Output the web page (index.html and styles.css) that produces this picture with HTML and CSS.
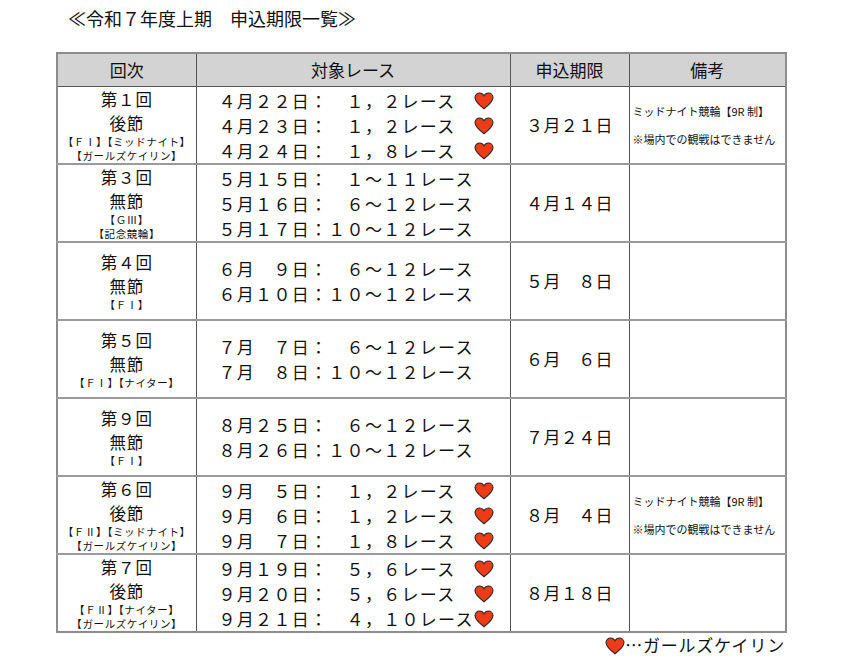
FILE: index.html
```html
<!DOCTYPE html>
<html lang="ja">
<head>
<meta charset="utf-8">
<title>申込期限一覧</title>
<link rel="stylesheet" href="styles.css">
</head>
<body>
<div class="page">
  <h1 class="title">≪令和７年度上期　申込期限一覧≫</h1>
  <table class="schedule">
    <colgroup>
      <col class="c-kai"><col class="c-race"><col class="c-date"><col class="c-note">
    </colgroup>
    <thead>
      <tr><th>回次</th><th>対象レース</th><th>申込期限</th><th>備考</th></tr>
    </thead>
    <tbody>
      <tr>
        <td class="kai"><div class="k">第１回</div><div class="s">後節</div><div class="t">【ＦⅠ】【ミッドナイト】</div><div class="t">【ガールズケイリン】</div></td>
        <td class="race">
          <div>４月２２日：　１，２レース　<svg class="heart" viewBox="0 0 20 18"><path d="M10 16.8C4.3 12.4 1 9.3 1 5.6 1 2.9 3.1 1 5.6 1c2 0 3.5 1.1 4.4 2.8C10.9 2.1 12.4 1 14.4 1 16.9 1 19 2.9 19 5.6c0 3.7-3.3 6.8-9 11.2z"/></svg></div>
          <div>４月２３日：　１，２レース　<svg class="heart" viewBox="0 0 20 18"><path d="M10 16.8C4.3 12.4 1 9.3 1 5.6 1 2.9 3.1 1 5.6 1c2 0 3.5 1.1 4.4 2.8C10.9 2.1 12.4 1 14.4 1 16.9 1 19 2.9 19 5.6c0 3.7-3.3 6.8-9 11.2z"/></svg></div>
          <div>４月２４日：　１，８レース　<svg class="heart" viewBox="0 0 20 18"><path d="M10 16.8C4.3 12.4 1 9.3 1 5.6 1 2.9 3.1 1 5.6 1c2 0 3.5 1.1 4.4 2.8C10.9 2.1 12.4 1 14.4 1 16.9 1 19 2.9 19 5.6c0 3.7-3.3 6.8-9 11.2z"/></svg></div>
        </td>
        <td class="date">３月２１日</td>
        <td class="note"><div>ミッドナイト競輪【9R 制】</div><div>※場内での観戦はできません</div></td>
      </tr>
      <tr>
        <td class="kai"><div class="k">第３回</div><div class="s">無節</div><div class="t">【ＧⅢ】</div><div class="t">【記念競輪】</div></td>
        <td class="race">
          <div>５月１５日：　１～１１レース</div>
          <div>５月１６日：　６～１２レース</div>
          <div>５月１７日：１０～１２レース</div>
        </td>
        <td class="date">４月１４日</td>
        <td class="note"></td>
      </tr>
      <tr>
        <td class="kai"><div class="k">第４回</div><div class="s">無節</div><div class="t">【ＦⅠ】</div></td>
        <td class="race">
          <div>６月　９日：　６～１２レース</div>
          <div>６月１０日：１０～１２レース</div>
        </td>
        <td class="date">５月　８日</td>
        <td class="note"></td>
      </tr>
      <tr>
        <td class="kai"><div class="k">第５回</div><div class="s">無節</div><div class="t">【ＦⅠ】【ナイター】</div></td>
        <td class="race">
          <div>７月　７日：　６～１２レース</div>
          <div>７月　８日：１０～１２レース</div>
        </td>
        <td class="date">６月　６日</td>
        <td class="note"></td>
      </tr>
      <tr>
        <td class="kai"><div class="k">第９回</div><div class="s">無節</div><div class="t">【ＦⅠ】</div></td>
        <td class="race">
          <div>８月２５日：　６～１２レース</div>
          <div>８月２６日：１０～１２レース</div>
        </td>
        <td class="date">７月２４日</td>
        <td class="note"></td>
      </tr>
      <tr>
        <td class="kai"><div class="k">第６回</div><div class="s">後節</div><div class="t">【ＦⅡ】【ミッドナイト】</div><div class="t">【ガールズケイリン】</div></td>
        <td class="race">
          <div>９月　５日：　１，２レース　<svg class="heart" viewBox="0 0 20 18"><path d="M10 16.8C4.3 12.4 1 9.3 1 5.6 1 2.9 3.1 1 5.6 1c2 0 3.5 1.1 4.4 2.8C10.9 2.1 12.4 1 14.4 1 16.9 1 19 2.9 19 5.6c0 3.7-3.3 6.8-9 11.2z"/></svg></div>
          <div>９月　６日：　１，２レース　<svg class="heart" viewBox="0 0 20 18"><path d="M10 16.8C4.3 12.4 1 9.3 1 5.6 1 2.9 3.1 1 5.6 1c2 0 3.5 1.1 4.4 2.8C10.9 2.1 12.4 1 14.4 1 16.9 1 19 2.9 19 5.6c0 3.7-3.3 6.8-9 11.2z"/></svg></div>
          <div>９月　７日：　１，８レース　<svg class="heart" viewBox="0 0 20 18"><path d="M10 16.8C4.3 12.4 1 9.3 1 5.6 1 2.9 3.1 1 5.6 1c2 0 3.5 1.1 4.4 2.8C10.9 2.1 12.4 1 14.4 1 16.9 1 19 2.9 19 5.6c0 3.7-3.3 6.8-9 11.2z"/></svg></div>
        </td>
        <td class="date">８月　４日</td>
        <td class="note"><div>ミッドナイト競輪【9R 制】</div><div>※場内での観戦はできません</div></td>
      </tr>
      <tr>
        <td class="kai"><div class="k">第７回</div><div class="s">後節</div><div class="t">【ＦⅡ】【ナイター】</div><div class="t">【ガールズケイリン】</div></td>
        <td class="race">
          <div>９月１９日：　５，６レース　<svg class="heart" viewBox="0 0 20 18"><path d="M10 16.8C4.3 12.4 1 9.3 1 5.6 1 2.9 3.1 1 5.6 1c2 0 3.5 1.1 4.4 2.8C10.9 2.1 12.4 1 14.4 1 16.9 1 19 2.9 19 5.6c0 3.7-3.3 6.8-9 11.2z"/></svg></div>
          <div>９月２０日：　５，６レース　<svg class="heart" viewBox="0 0 20 18"><path d="M10 16.8C4.3 12.4 1 9.3 1 5.6 1 2.9 3.1 1 5.6 1c2 0 3.5 1.1 4.4 2.8C10.9 2.1 12.4 1 14.4 1 16.9 1 19 2.9 19 5.6c0 3.7-3.3 6.8-9 11.2z"/></svg></div>
          <div>９月２１日：　４，１０レース<svg class="heart" viewBox="0 0 20 18"><path d="M10 16.8C4.3 12.4 1 9.3 1 5.6 1 2.9 3.1 1 5.6 1c2 0 3.5 1.1 4.4 2.8C10.9 2.1 12.4 1 14.4 1 16.9 1 19 2.9 19 5.6c0 3.7-3.3 6.8-9 11.2z"/></svg></div>
        </td>
        <td class="date">８月１８日</td>
        <td class="note"></td>
      </tr>
    </tbody>
  </table>
  <p class="legend"><svg class="heart" viewBox="0 0 20 18"><path d="M10 16.8C4.3 12.4 1 9.3 1 5.6 1 2.9 3.1 1 5.6 1c2 0 3.5 1.1 4.4 2.8C10.9 2.1 12.4 1 14.4 1 16.9 1 19 2.9 19 5.6c0 3.7-3.3 6.8-9 11.2z"/></svg>…ガールズケイリン</p>
</div>
</body>
</html>
```

FILE: styles.css
```css
html, body {
  margin: 0;
  padding: 0;
  background: #ffffff;
}

body {
  font-family: "Noto Sans CJK JP", "Noto Sans", sans-serif;
  color: #111111;
}

.page {
  width: 729px;
  margin-left: 56px;
  padding-top: 6px;
}

.title {
  margin: 0 0 0 12px;
  height: 46px;
  font-size: 18px;
  line-height: 24px;
  font-weight: normal;
}

.schedule {
  width: 729px;
  table-layout: fixed;
  border-collapse: collapse;
  border: 2px solid #8c8c8c;
}

.c-kai { width: 139px; }
.c-race { width: 314px; }
.c-date { width: 119px; }
.c-note { width: 157px; }

.schedule th {
  height: 32px;
  padding: 0;
  background: #d3d3d3;
  font-size: 17px;
  line-height: 24px;
  font-weight: normal;
  text-align: center;
  border: 1px solid #555555;
  border-top: 2px solid #8c8c8c;
}

.schedule td {
  height: 76px;
  padding: 0;
  border: 1px solid #555555;
  vertical-align: middle;
}

.schedule tbody tr + tr td {
  border-top: 2px solid #9a9a9a;
}

.kai {
  text-align: center;
}

.kai .k {
  font-size: 16.5px;
  letter-spacing: 0.8px;
  line-height: 24px;
}

.kai .s {
  font-size: 16.5px;
  letter-spacing: 0.8px;
  line-height: 24px;
}

.kai .t {
  font-size: 10.5px;
  letter-spacing: 0.6px;
  line-height: 14px;
  white-space: nowrap;
}

.race {
  padding-left: 22px !important;
  font-size: 17px;
  letter-spacing: 1.3px;
  line-height: 25px;
  white-space: nowrap;
}

.heart {
  width: 20px;
  height: 18px;
  vertical-align: -2px;
}

.heart path {
  fill: #f03c16;
  stroke: #2a2a2a;
  stroke-width: 1.1;
}

.date {
  text-align: center;
  font-size: 17px;
  letter-spacing: 0.4px;
  line-height: 24px;
}

.note {
  padding-left: 3px !important;
  font-size: 11px;
  line-height: 28px;
  white-space: nowrap;
}

.legend {
  margin: 0;
  text-align: right;
  font-size: 17px;
  letter-spacing: 0.8px;
  line-height: 24px;
}

.legend .heart {
  vertical-align: -3px;
}
```
